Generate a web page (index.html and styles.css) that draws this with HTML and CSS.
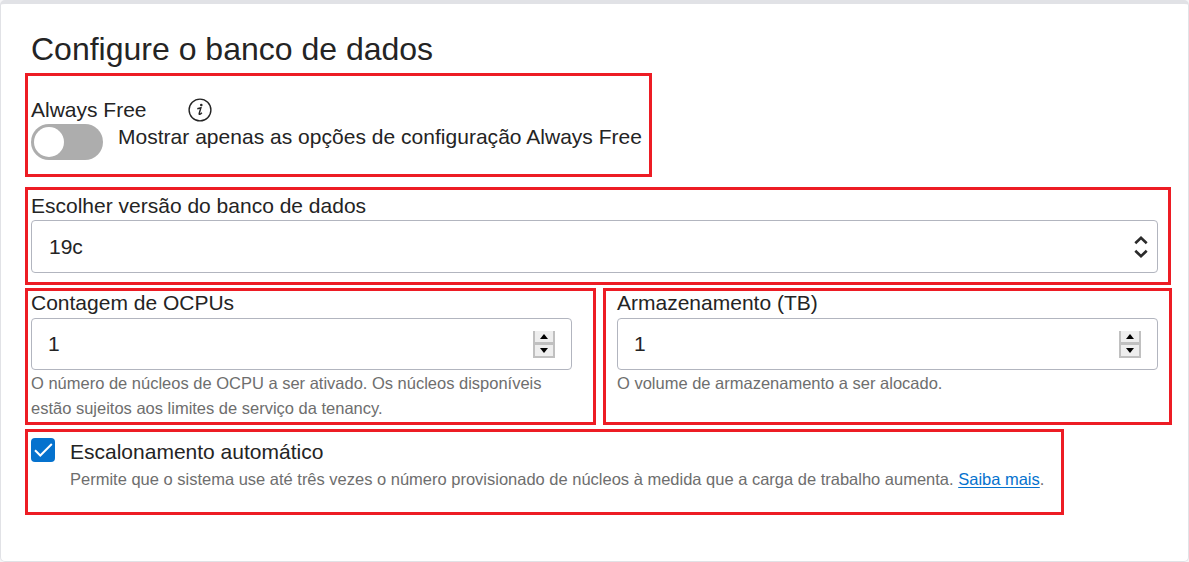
FILE: index.html
```html
<!DOCTYPE html>
<html lang="pt-BR">
<head>
<meta charset="utf-8">
<title>Configure o banco de dados</title>
<link rel="stylesheet" href="styles.css">
</head>
<body>
<main class="panel">
  <h1 class="title">Configure o banco de dados</h1>

  <section class="group group-free">
    <div class="label-row">
      <span class="label">Always Free</span>
      <svg class="info" width="24" height="24" viewBox="0 0 24 24" fill="none">
        <circle cx="12" cy="12" r="10.9" stroke="#242424" stroke-width="1.4"/>
        <circle cx="13.3" cy="7" r="1.3" fill="#242424"/>
        <path d="M9.3 10.7l3.6-.9-1.7 5.7c-.3 1.4.9 1.1 2.7-.7" stroke="#242424" stroke-width="1.4"/>
      </svg>
    </div>
    <div class="toggle-row">
      <span class="toggle"><span class="knob"></span></span>
      <span class="label toggle-text">Mostrar apenas as opções de configuração Always Free</span>
    </div>
  </section>

  <section class="group group-version">
    <div class="label">Escolher versão do banco de dados</div>
    <div class="field select">
      <span class="value">19c</span>
      <svg class="chevrons" width="14" height="24" viewBox="0 0 14 24" fill="none" stroke="#2b2b2b" stroke-width="2.6">
        <path d="M1.3 8.3L7 2.8l5.7 5.5M1.3 15.8L7 21.3l5.7-5.5"/>
      </svg>
    </div>
  </section>

  <div class="columns">
    <section class="group group-cpu">
      <div class="label">Contagem de OCPUs</div>
      <div class="field number">
        <span class="value">1</span>
        <span class="spinner"><span class="step up"></span><span class="step down"></span></span>
      </div>
      <p class="hint">O número de núcleos de OCPU a ser ativado. Os núcleos disponíveis<br>estão sujeitos aos limites de serviço da tenancy.</p>
    </section>
    <section class="group group-storage">
      <div class="label">Armazenamento (TB)</div>
      <div class="field number">
        <span class="value">1</span>
        <span class="spinner"><span class="step up"></span><span class="step down"></span></span>
      </div>
      <p class="hint">O volume de armazenamento a ser alocado.</p>
    </section>
  </div>

  <section class="group group-scale">
    <svg class="check" width="24" height="24" viewBox="0 0 24 24" fill="none">
      <rect width="24" height="24" rx="4" fill="#0572ce"/>
      <path d="M4 12.2l5.3 5.3L20.8 6" stroke="#fff" stroke-width="2"/>
    </svg>
    <div>
      <div class="label">Escalonamento automático</div>
      <p class="hint">Permite que o sistema use até três vezes o número provisionado de núcleos à medida que a carga de trabalho aumenta. <a class="link" href="#">Saiba mais</a>.</p>
    </div>
  </section>
</main>
</body>
</html>
```
FILE: styles.css
```css
* { box-sizing: border-box; }

body {
  margin: 0;
  background: #f5f5f7;
  color: #242424;
  font-family: "Liberation Sans", Arial, sans-serif;
  font-size: 21px;
  line-height: 24px;
}

.panel {
  height: 562px;
  padding: 27px 0 0 24px;
  background: #fff;
  border: 1px solid #e1e2e6;
  border-top-width: 4px;
  border-radius: 5px;
}

.title {
  margin: 0 0 6px 6px;
  font-size: 32px;
  font-weight: 400;
  line-height: 36px;
}

.label, .value { white-space: nowrap; }

.group { border: 3px solid #ed1c24; }

.group-free {
  width: 627px;
  height: 104px;
  padding: 21px 0 0 3px;
}

.label-row {
  display: flex;
  align-items: flex-start;
  gap: 41px;
  height: 27px;
}

.info {
  display: block;
  margin-top: 1px;
}

.label-row .label { margin-top: 1px; }

.toggle-row {
  display: flex;
  align-items: flex-start;
  gap: 15px;
}

.toggle {
  width: 72px;
  height: 36px;
  padding: 3px;
  border-radius: 18px;
  background: #adadad;
}

.knob {
  display: block;
  width: 30px;
  height: 30px;
  border-radius: 50%;
  background: #fff;
}

.toggle-text {
  margin-top: 1px;
  letter-spacing: .02px;
}

.group-version {
  width: 1146px;
  height: 98px;
  margin-top: 10px;
  padding: 4px 10px 0 3px;
}

.field {
  display: flex;
  align-items: center;
  justify-content: space-between;
  background: #fff;
  border: 1px solid #b2b5bf;
  border-radius: 4px;
}

.select {
  height: 53px;
  margin-top: 2px;
  padding: 0 9px 0 17px;
}

.columns {
  display: flex;
  gap: 7px;
  margin-top: 3px;
}

.group-cpu, .group-storage { height: 137px; }

.group-cpu {
  width: 571px;
  padding-left: 3px;
}

.group-storage {
  width: 569px;
  padding-left: 11px;
}

.number {
  width: 541px;
  height: 52px;
  margin-top: 3px;
  padding: 0 16px;
}

.spinner {
  display: grid;
  grid-template-rows: 12px 15px;
  width: 22px;
}

.step {
  display: flex;
  align-items: center;
  justify-content: center;
  background: #eee;
  border: 2px solid #c0c0c0;
}

.up {
  border-top: 0;
  border-bottom-width: 1px;
}

.step::before {
  content: "";
  border: 4.5px solid transparent;
}

.up::before {
  border-top: 0;
  border-bottom: 5px solid #000;
}

.down::before {
  border-bottom: 0;
  border-top: 5px solid #000;
}

.hint {
  margin: 0;
  color: #6e6e6e;
  font-size: 16.5px;
  line-height: 25px;
  letter-spacing: -.005px;
  white-space: nowrap;
}

.columns .hint { margin-top: 1px; }

.group-scale {
  display: flex;
  align-items: flex-start;
  gap: 15px;
  width: 1039px;
  height: 86px;
  margin-top: 4px;
  padding: 6px 0 0 3px;
}

.group-scale .label { margin-top: 2px; }

.group-scale .hint { margin-top: 3px; }

.link {
  color: #0572ce;
  text-underline-offset: 2px;
  text-decoration-thickness: 1px;
}
```
